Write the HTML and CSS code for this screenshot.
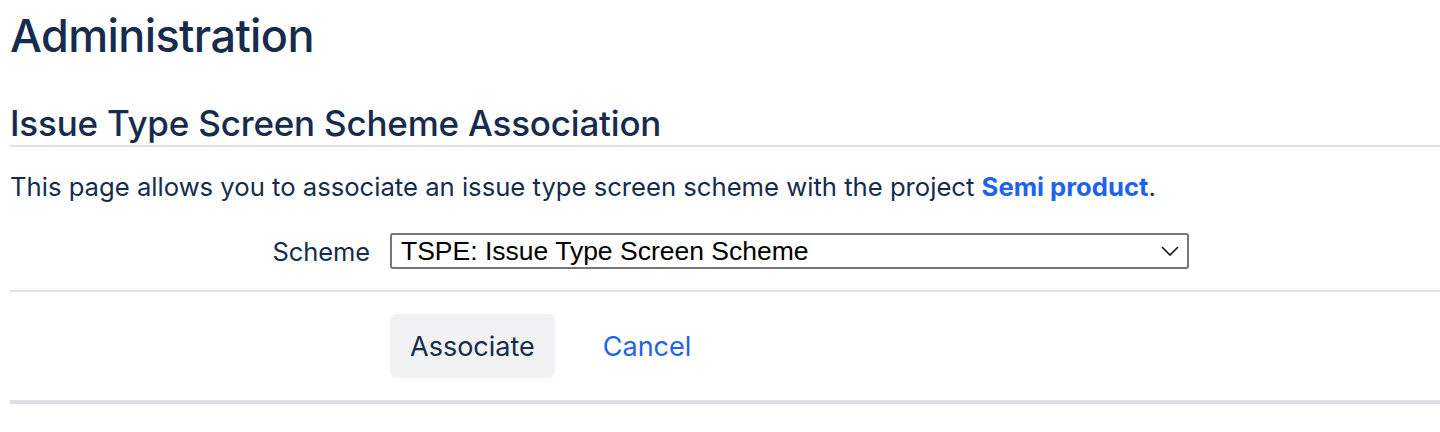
FILE: index.html
```html
<!DOCTYPE html>
<html lang="en">
<head>
<meta charset="utf-8">
<title>Administration</title>
<link rel="stylesheet" href="styles.css">
</head>
<body>
<div class="page">
  <h1 class="page-title">Administration</h1>
  <h2 class="section-title">Issue Type Screen Scheme Association</h2>
  <p class="desc">This page allows you to associate an issue type screen scheme with the project <a class="project-link" href="#">Semi product</a>.</p>
  <form class="form">
    <div class="field-row">
      <label class="field-label" for="scheme">Scheme</label>
      <div class="select">
        <span class="select-value">TSPE: Issue Type Screen Scheme</span>
        <svg class="chevron" width="18" height="10" viewBox="0 0 18 10" aria-hidden="true"><path d="M1 1 L9 9 L17 1" fill="none" stroke="#111" stroke-width="1.6"/></svg>
      </div>
    </div>
    <div class="buttons">
      <button class="btn" type="button">Associate</button>
      <a class="cancel" href="#">Cancel</a>
    </div>
  </form>
</div>
</body>
</html>
```
FILE: styles.css
```css
html, body {
  margin: 0;
  padding: 0;
  background: #ffffff;
}
body {
  font-family: Inter, "Noto Sans", sans-serif;
  color: #172b4d;
}
.page {
  padding-left: 10px;
}
.page-title {
  margin: 0;
  padding-top: 8px;
  font-size: 45px;
  line-height: 56px;
  font-weight: 500;
  letter-spacing: -0.6px;
}
.section-title {
  margin: 38px 0 0;
  font-size: 35px;
  line-height: 42px;
  font-weight: 500;
  letter-spacing: -0.2px;
  padding-bottom: 1px;
  border-bottom: 2px solid #dfe1e6;
}
.desc {
  margin: 26px 0 0;
  font-size: 25.65px;
  line-height: 28px;
  font-weight: 400;
  letter-spacing: 0;
}
.project-link {
  color: #1d63ed;
  font-weight: 700;
  text-decoration: none;
}
.form {
  margin-top: 32px;
}
.field-row {
  display: flex;
  align-items: center;
  gap: 20px;
  padding-bottom: 21px;
  border-bottom: 2px solid #dfe1e6;
}
.field-label {
  width: 360px;
  text-align: right;
  font-size: 25.5px;
  letter-spacing: -0.1px;
}
.select {
  box-sizing: border-box;
  width: 799px;
  height: 36px;
  border: 2px solid #767676;
  border-radius: 3px;
  display: flex;
  align-items: center;
  justify-content: space-between;
  padding: 0 8px 0 9px;
  font-family: "Liberation Sans", Arial, sans-serif;
  font-size: 26.5px;
  color: #000;
}
.chevron {
  display: block;
}
.buttons {
  display: flex;
  align-items: center;
  gap: 48px;
  padding: 22px 0 22px 380px;
  border-bottom: 4px solid #dfe1e6;
}
.btn {
  font-family: Inter, "Noto Sans", sans-serif;
  font-size: 27px;
  color: #172b4d;
  background: #f1f2f4;
  border: none;
  border-radius: 6px;
  height: 64px;
  padding: 0 20px;
}
.cancel {
  color: #1d63ed;
  text-decoration: none;
  font-size: 27px;
}
```
